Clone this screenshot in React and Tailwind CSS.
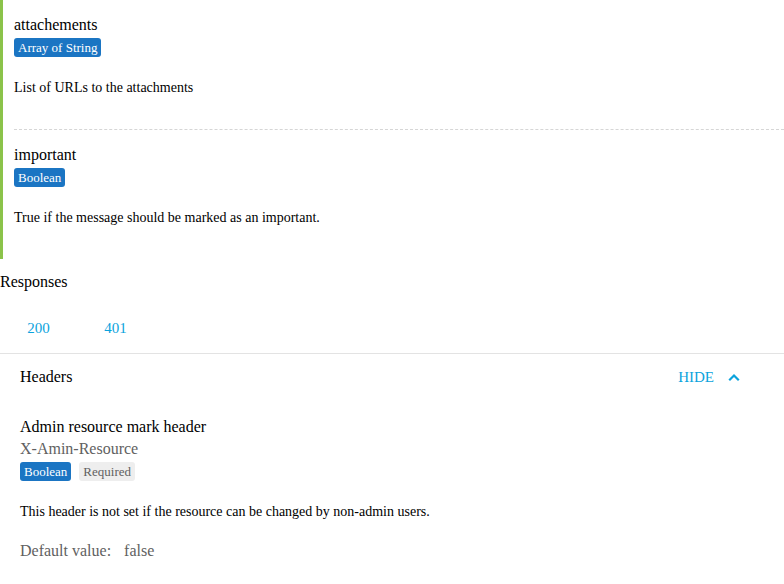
const serif = { fontFamily: '"Liberation Serif", "Times New Roman", serif' };

function Badge({ children, muted }) {
  return (
    <span
      className={`inline-block px-1 text-[13px] leading-[19px] rounded-[3px] ${
        muted ? "bg-[#eeeeee] text-[#616161]" : "bg-[#1b75c3] text-white"
      }`}
    >
      {children}
    </span>
  );
}

function Property({ name, type, description, first }) {
  return (
    <div
      className={`pt-[16px] pb-[31px] ${
        first ? "" : "border-t border-dashed border-[#d6d6d6]"
      }`}
    >
      <div className="text-[16px] leading-[18px] text-black">{name}</div>
      <div className="mt-1 flex">
        <Badge>{type}</Badge>
      </div>
      <p className="mt-[21px] text-[14px] leading-[20px] text-black">{description}</p>
    </div>
  );
}

export default function App() {
  return (
    <div className="w-[784px] h-[584px] overflow-hidden bg-white" style={serif}>
      {/* body properties */}
      <div className="border-l-[3px] border-[#8bc34a] pl-[11px]">
        <Property
          first
          name="attachements"
          type="Array of String"
          description="List of URLs to the attachments"
        />
        <Property
          name="important"
          type="Boolean"
          description="True if the message should be marked as an important."
        />
      </div>

      <h3 className="mt-[14px] text-[16px] leading-[18px] text-black">Responses</h3>

      {/* status tabs */}
      <div className="mt-[28px] flex border-b border-[#e3e3e3]">
        <div className="w-[77px] pb-[16px] text-center text-[15px] leading-[18px] text-[#0ba3dd]">
          200
        </div>
        <div className="w-[77px] pb-[16px] text-center text-[15px] leading-[18px] text-[#0ba3dd]">
          401
        </div>
      </div>

      {/* headers */}
      <div className="px-5">
        <div className="mt-[14px] flex items-center justify-between pr-[24px]">
          <span className="text-[16px] leading-[18px] text-black">Headers</span>
          <div className="flex items-center text-[#0ba3dd]">
            <span className="text-[15px] leading-[18px]">HIDE</span>
            <svg
              className="ml-[14px] w-3 h-3"
              viewBox="0 0 12 12"
              fill="none"
              stroke="currentColor"
              strokeWidth="2.2"
              strokeLinecap="square"
            >
              <path d="M2 8.5 L6 4.5 L10 8.5" />
            </svg>
          </div>
        </div>

        <div className="mt-8 text-[16px] leading-[18px] text-black">
          Admin resource mark header
        </div>
        <div className="mt-1 text-[16px] leading-[18px] text-[#616161]">X-Amin-Resource</div>
        <div className="mt-1 flex gap-2">
          <Badge>Boolean</Badge>
          <Badge muted>Required</Badge>
        </div>
        <p className="mt-[21px] text-[14px] leading-[20px] text-black">
          This header is not set if the resource can be changed by non-admin users.
        </p>
        <div className="mt-5 text-[16px] leading-[18px] text-[#616161]">
          <span>Default value:</span>
          <span className="ml-[13px]">false</span>
        </div>
      </div>
    </div>
  );
}
